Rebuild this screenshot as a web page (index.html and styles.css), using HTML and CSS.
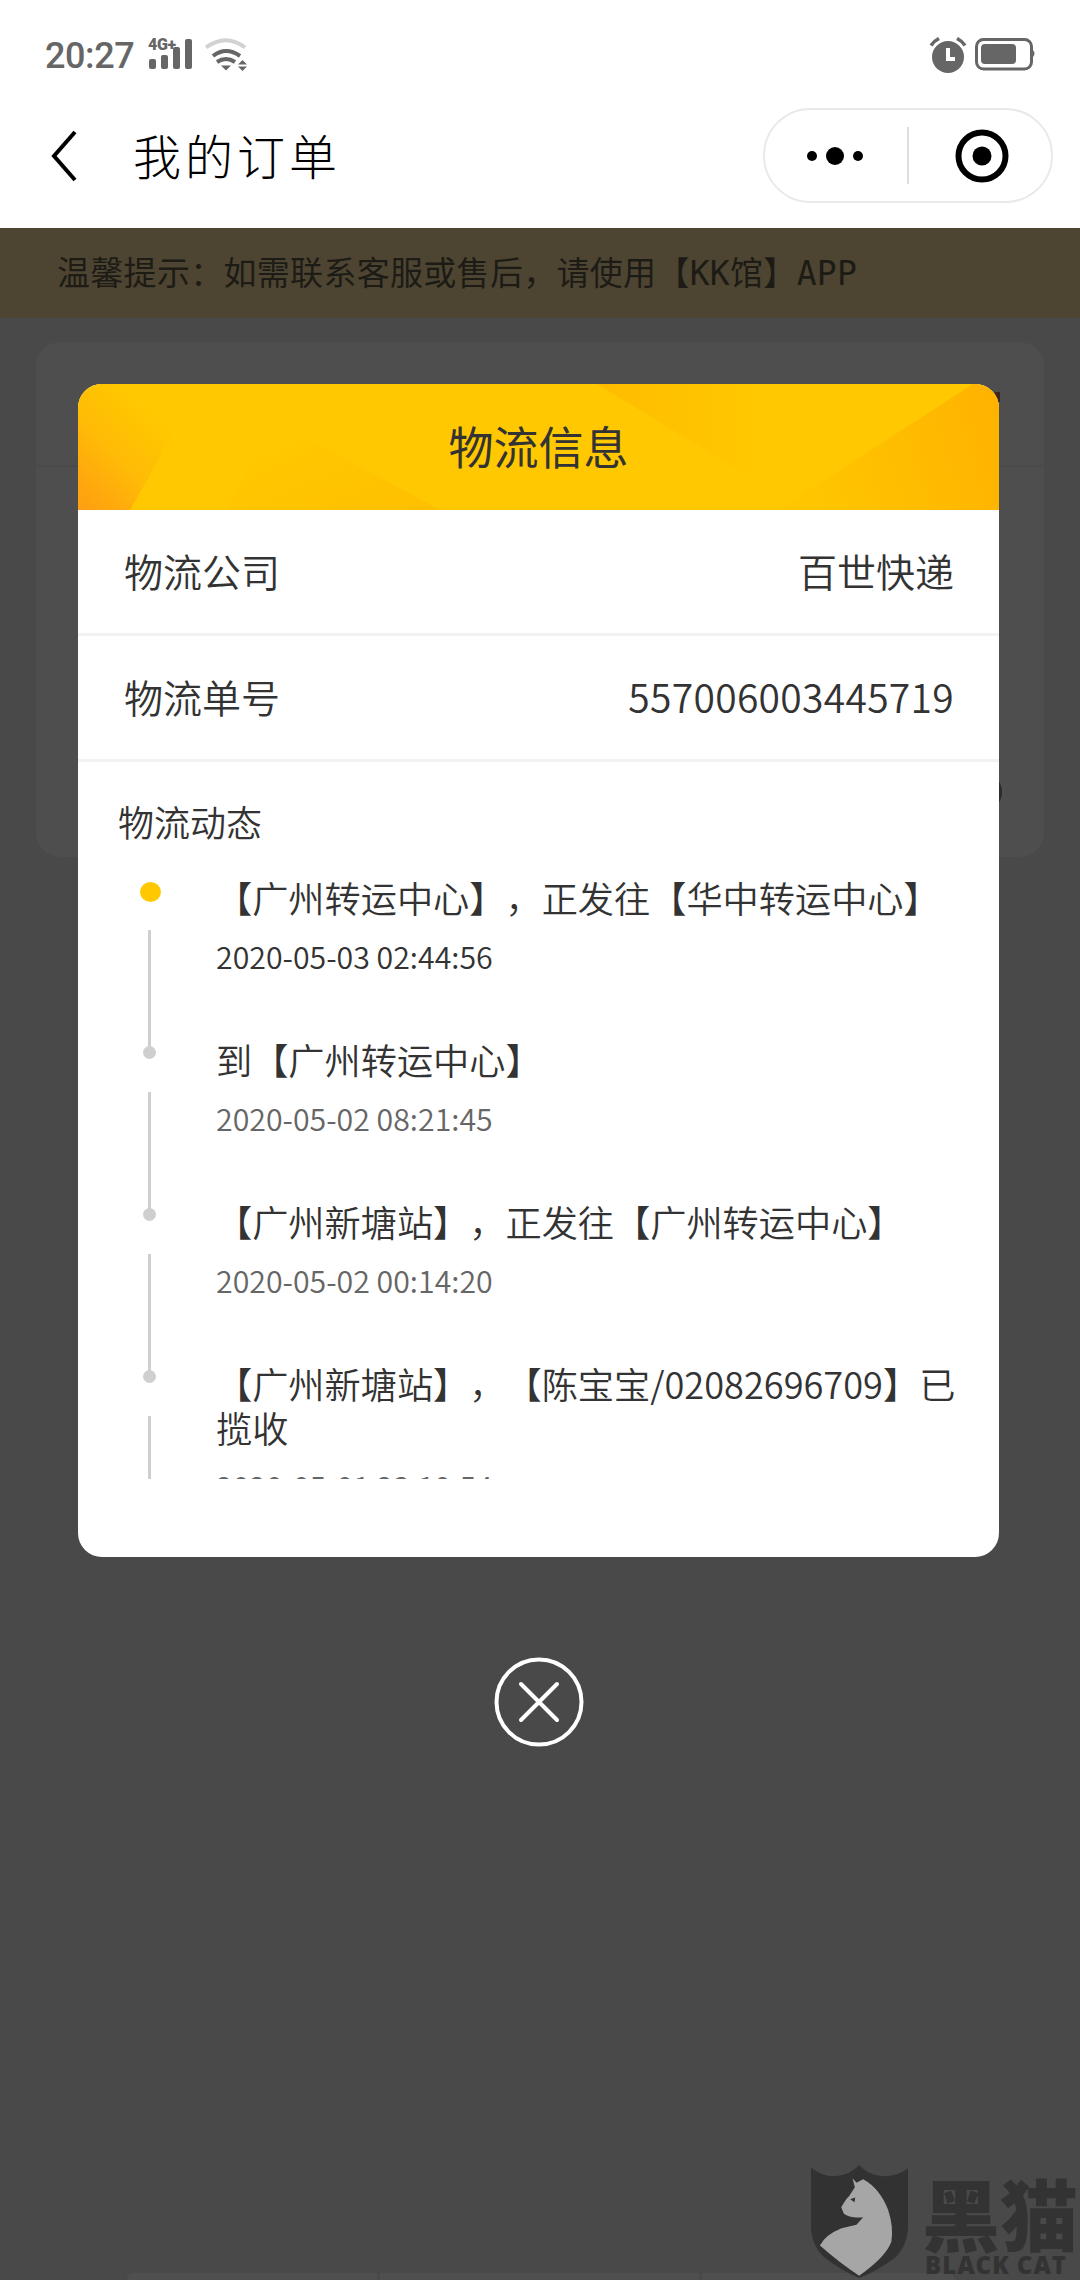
FILE: index.html
```html
<!DOCTYPE html>
<html lang="zh-CN">
<head>
<meta charset="utf-8">
<title>我的订单</title>
<link rel="stylesheet" href="styles.css">
</head>
<body>
<div class="page">
  <header class="top">
    <div class="status">
      <div class="status-left">
        <span class="time">20:27</span>
        <div class="signal">
          <span class="net">4G+</span>
          <svg class="icon-bars" width="44" height="31" viewBox="0 0 44 31"><rect x="1" y="20" width="7" height="10" rx="2"/><rect x="13" y="16" width="7" height="14" rx="2"/><rect x="25" y="8" width="7" height="22" rx="2"/><rect x="37" y="0" width="7" height="30" rx="2"/></svg>
        </div>
        <svg class="icon-wifi" width="44" height="34" viewBox="204 37 44 34"><path d="M206 47.500Q226 33 245 47.500" fill="none" stroke="#d2d2d2" stroke-width="4"/><path d="M213 56Q226 46 240 56" fill="none" stroke="#666" stroke-width="4"/><path d="M217 62Q226 56 235 62" fill="none" stroke="#666" stroke-width="4"/><path d="M221 65.500H231L226 70.500Z" fill="#666"/><path d="M238 64.500H247L242.500 60Z" fill="#666"/><path d="M238 66.500H247L242.500 71Z" fill="#666"/></svg>
      </div>
      <div class="status-right">
        <svg width="38" height="36" viewBox="929 35 38 36"><circle cx="948" cy="55" r="16" fill="#666"/><path d="M931 43.500Q934 39 939 36.500M965 43.500Q962 39 957 36.500" fill="none" stroke="#666" stroke-width="3.500"/><path d="M948 46V57H955" fill="none" stroke="#fff" stroke-width="4"/></svg>
        <svg width="61" height="34" viewBox="975 37 61 34"><rect x="976.500" y="39.500" width="55" height="29.500" rx="7" fill="none" stroke="#666" stroke-width="3"/><rect x="981" y="44" width="35" height="20" rx="4" fill="#666"/><path d="M1033 50Q1036 53.500 1033 57Z" fill="#666"/></svg>
      </div>
    </div>
    <nav class="nav">
      <svg class="back" width="28" height="52" viewBox="0 0 28 52"><path d="M25 2L4 26L25 50" fill="none" stroke="#000" stroke-width="4"/></svg>
      <h1 class="nav-title">我的订单</h1>
      <div class="capsule">
        <div class="capsule-cell capsule-more">
          <svg width="56" height="20" viewBox="0 0 56 20"><circle cx="5" cy="10" r="5"/><circle cx="28" cy="10" r="9"/><circle cx="51" cy="10" r="5"/></svg>
        </div>
        <span class="capsule-rule"></span>
        <div class="capsule-cell capsule-target">
          <svg width="54" height="54" viewBox="0 0 54 54"><circle cx="27" cy="27" r="23.500" fill="none" stroke="#000" stroke-width="6"/><circle cx="27" cy="27" r="9.500"/></svg>
        </div>
      </div>
    </nav>
  </header>

  <main class="main">
    <div class="notice">温馨提示：如需联系客服或售后，请使用【KK馆】APP</div>
    <section class="order-card">
      <div class="order-head"><span class="order-mark"></span></div>
      <span class="order-ring"></span>
    </section>

    <div class="tabs"><span class="tab tab-a"></span><span class="tab tab-b"></span><span class="tab tab-c"></span></div>

    <div class="watermark">
      <svg class="shield" width="97" height="113" viewBox="333 195 292 340">
        <path fill="#333233" d="M333 203Q370 232 410 228Q450 225 478 195Q505 225 545 228Q590 232 625 205L625 390Q620 440 590 470Q540 510 478 535Q420 510 370 470Q338 440 333 390Z"/>
        <path fill="#a6a6a6" d="M458 235L470 248L490 238Q540 265 565 330Q582 380 575 425Q560 470 478 528Q420 490 360 437Q375 405 425 385Q460 378 470 375L490 352Q450 356 432 342L424 322Q440 295 447 290L465 262Z"/>
        <path fill="#333233" d="M451 298L466 293L464 307Z"/>
      </svg>
      <div class="brand">
        <div class="brand-cn">黑猫</div>
        <div class="brand-en">BLACK CAT</div>
      </div>
    </div>

    <div class="overlay">
      <section class="modal">
        <div class="modal-head">
          <svg class="modal-art" width="921" height="126" viewBox="0 0 921 126" preserveAspectRatio="none" aria-hidden="true">
            <defs>
              <linearGradient id="gl" gradientUnits="userSpaceOnUse" x1="0" y1="126" x2="85" y2="40"><stop offset="0" stop-color="#ff9d12"/><stop offset=".55" stop-color="#ffbb06"/><stop offset="1" stop-color="#ffc800"/></linearGradient>
              <linearGradient id="gr" gradientUnits="userSpaceOnUse" x1="921" y1="30" x2="720" y2="90"><stop offset="0" stop-color="#ffb300"/><stop offset="1" stop-color="#ffc600"/></linearGradient>
              <linearGradient id="gm" x1="0" y1="0" x2="1" y2="0"><stop offset="0" stop-color="#ffbc00"/><stop offset="1" stop-color="#ffc800"/></linearGradient>
              <linearGradient id="gb" x1="1" y1="1" x2="0" y2="0"><stop offset="0" stop-color="#ffbf00"/><stop offset=".75" stop-color="#ffc800"/></linearGradient>
            </defs>
            <rect width="921" height="126" fill="#ffc800"/>
            <path fill="url(#gl)" d="M0 0H124L52 126H0Z"/>
            <path fill="url(#gb)" d="M150 126L195 36L362 126Z"/>
            <path fill="url(#gm)" d="M519 0H680L675 95Z"/>
            <path fill="url(#gr)" d="M921 0H895L700 126H921Z"/>
          </svg>
          <h2 class="modal-title">物流信息</h2>
        </div>
        <div class="info-row"><span>物流公司</span><span>百世快递</span></div>
        <div class="info-row"><span>物流单号</span><span class="info-number">557006003445719</span></div>
        <div class="track">
          <h3 class="track-title">物流动态</h3>
          <ol class="track-list">
            <li class="step step-now">
              <div class="rail"><span class="dot"></span><span class="rail-line"></span></div>
              <div class="step-body"><p class="step-text">【广州转运中心】，正发往【华中转运中心】</p><p class="step-date">2020-05-03 02:44:56</p></div>
            </li>
            <li class="step">
              <div class="rail"><span class="dot"></span><span class="rail-line"></span></div>
              <div class="step-body"><p class="step-text">到【广州转运中心】</p><p class="step-date">2020-05-02 08:21:45</p></div>
            </li>
            <li class="step">
              <div class="rail"><span class="dot"></span><span class="rail-line"></span></div>
              <div class="step-body"><p class="step-text">【广州新塘站】，正发往【广州转运中心】</p><p class="step-date">2020-05-02 00:14:20</p></div>
            </li>
            <li class="step">
              <div class="rail"><span class="dot"></span><span class="rail-line"></span></div>
              <div class="step-body"><p class="step-text">【广州新塘站】，【陈宝宝/02082696709】已揽收</p><p class="step-date">2020-05-01 23:19:54</p></div>
            </li>
          </ol>
        </div>
      </section>
      <button class="close" type="button" aria-label="关闭">
        <svg width="90" height="90" viewBox="0 0 90 90"><circle cx="45" cy="45" r="42.500" fill="none" stroke="#fff" stroke-width="4"/><path d="M27 27L63 63M63 27L27 63" fill="none" stroke="#fff" stroke-width="4" stroke-linecap="round"/></svg>
      </button>
    </div>
  </main>
</div>
</body>
</html>
```
FILE: styles.css
```css
* { box-sizing: border-box; }
html, body { margin: 0; padding: 0; }
body { font-family: "Noto Sans CJK SC", "Noto Sans", sans-serif; background: #494949; text-spacing-trim: space-all; font-feature-settings: "chws" 0, "palt" 0; }
h1, h2, h3, p, ol { margin: 0; padding: 0; font-weight: 400; }
ol { list-style: none; }

.page { width: 1080px; height: 2280px; display: flex; flex-direction: column; overflow: hidden; }

.top { height: 228px; flex: none; background: #fff; }
.status { height: 108px; padding: 37px 44px 0 45px; display: flex; justify-content: space-between; }
.status-left { display: flex; align-items: flex-start; }
.time { font-family: Roboto, sans-serif; font-size: 36px; line-height: 36px; color: #666; font-weight: 500; margin-top: 1px; width: 103px; letter-spacing: -.4px; }
.signal { position: relative; width: 45px; height: 31px; margin-top: 2px; }
.net { position: absolute; left: 0; top: -2px; font-family: Roboto, sans-serif; font-size: 16px; line-height: 16px; font-weight: 900; color: #666; letter-spacing: -.3px; }
.icon-bars { display: block; fill: #666; }
.icon-wifi { display: block; margin-left: 11px; }
.status-right { display: flex; gap: 8px; }
.status-right svg { display: block; }

.nav { height: 95px; padding: 0 27px 0 50px; display: flex; align-items: center; }
.back { flex: none; }
.nav-title { margin-left: 55px; margin-top: -4px; flex: 1; font-size: 48px; line-height: 60px; color: #000; letter-spacing: 4px; font-weight: 300; }
.capsule { width: 290px; height: 95px; border: 2px solid #e9e9e9; border-radius: 48px; display: flex; align-items: center; }
.capsule-cell { width: 142px; flex: none; display: flex; justify-content: center; }
.capsule-cell svg { display: block; }
.capsule-more { padding-right: 2px; }
.capsule-target { padding-left: 4px; }
.capsule-rule { width: 2px; height: 57px; background: #dedede; flex: none; }

.main { position: relative; flex: 1; background: #494949; }
.notice { height: 90px; padding: 2px 0 0 57px; background: #4d4532; color: #1d1b15; font-family: "DejaVu Sans Mono", "Noto Sans CJK SC", monospace; font-size: 33px; line-height: 88px; letter-spacing: .3px; }

.order-card { position: relative; margin: 24px 36px 0; height: 515px; background: #4e4e4e; border-radius: 24px; }
.order-head { height: 125px; border-bottom: 2px solid #4a4a4a; }
.order-mark { position: absolute; right: 44px; top: 50px; width: 5px; height: 10px; background: #3d2422; }
.order-ring { position: absolute; left: 926px; top: 430px; width: 40px; height: 40px; border: 3px solid #2b2b2b; border-radius: 50%; }

.tabs { position: absolute; left: 127px; bottom: 0; display: flex; gap: 3px; }
.tab { height: 7px; background: #4f4f4f; display: block; }
.tab-a { width: 250px; border-top-left-radius: 6px; }
.tab-b { width: 319px; }
.tab-c { width: 252px; border-top-right-radius: 6px; }

.watermark { position: absolute; left: 811px; bottom: 2px; display: flex; align-items: flex-start; gap: 14px; }
.shield { display: block; flex: none; }
.brand { margin-top: 8px; width: 158px; }
.brand-cn { font-size: 78px; line-height: 78px; font-weight: 900; color: #343334; white-space: nowrap; }
.brand-en { font-family: "Open Sans", sans-serif; font-size: 24px; line-height: 24px; font-weight: 800; color: #343334; white-space: nowrap; margin: 2px 0 0 3px; letter-spacing: 1px; }

.overlay { position: absolute; inset: 0; padding: 156px 3px 0 0; display: flex; flex-direction: column; align-items: center; }
.modal { width: 921px; height: 1173px; background: #fff; border-radius: 24px; overflow: hidden; flex: none; color: #333; display: flex; flex-direction: column; }
.modal-head { position: relative; height: 126px; flex: none; display: flex; align-items: center; justify-content: center; padding-bottom: 3px; }
.modal-art { position: absolute; inset: 0; display: block; }
.modal-title { position: relative; font-size: 45px; line-height: 60px; color: #333; font-weight: 400; }
.info-row { height: 126px; flex: none; padding: 0 45px 4px 46px; border-bottom: 3px solid #f2f2f2; display: flex; justify-content: space-between; align-items: center; font-size: 39px; color: #333; font-weight: 350; }
.info-number { letter-spacing: .3px; }

.track { flex: none; height: 717px; padding: 0 0 0 40px; overflow: hidden; }
.track-title { font-size: 36px; line-height: 52px; margin-top: 33px; color: #333; font-weight: 350; }
.track-list { margin-top: 30px; height: 604px; overflow: hidden; }
.step { display: flex; padding-bottom: 58px; }
.rail { margin-left: -40px; width: 138px; padding-left: 4px; flex: none; display: flex; flex-direction: column; align-items: center; }
.dot { width: 13px; height: 13px; margin-top: 7px; border-radius: 50%; background: #cfcfcf; flex: none; }
.rail-line { width: 3px; height: 117px; margin-top: 33px; margin-bottom: -66px; background: #cfcfcf; flex: none; }
.step-now .dot { width: 21px; height: 20px; margin-top: 5px; margin-left: 2px; background: #ffc800; }
.step-now .rail-line { margin-top: 28px; }
.step-body { width: 740px; margin-top: -2px; }
.step-text { font-size: 36.200px; line-height: 44px; color: #333; font-weight: 350; }
.step-date { font-size: 30.300px; line-height: 44px; margin-top: 15px; color: #666; font-weight: 350; }
.step-now .step-date { color: #333; }

.close { flex: none; width: 90px; height: 90px; margin-top: 100px; padding: 0; border: 0; background: none; }
.close svg { display: block; }
```
